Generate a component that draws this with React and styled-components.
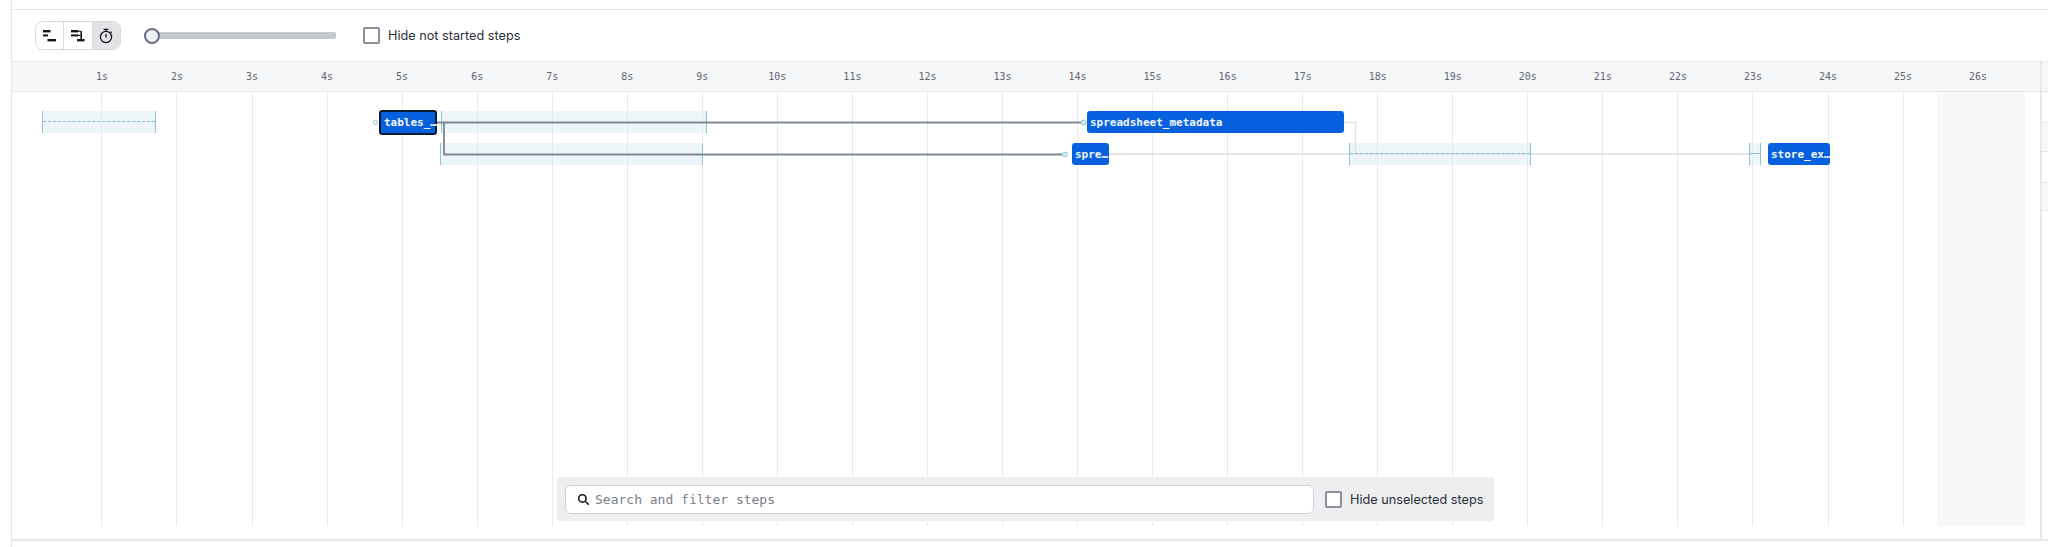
import React from 'react';
import styled, { createGlobalStyle } from 'styled-components';

const TICK = 75.05;
const START = 27.4;
const seconds = Array.from({ length: 26 }, (_, i) => i + 1);

const GlobalStyle = createGlobalStyle`
  html, body {
    margin: 0;
    background: #fff;
    font-family: Inter, "Liberation Sans", sans-serif;
  }
`;

const Page = styled.div`
  width: 2048px;
  height: 547px;
  box-sizing: border-box;
  padding-left: 11px;
  overflow: hidden;
`;

const Frame = styled.div`
  height: 100%;
  display: flex;
  flex-direction: column;
  border-left: 1px solid #e6e8eb;
`;

const TopStrip = styled.div`
  height: 9px;
  flex: none;
  border-bottom: 1px solid #e6e8eb;
`;

const Body = styled.div`
  display: flex;
  height: 529px;
  flex: none;
`;

const Main = styled.div`
  width: 2028px;
  flex: none;
  display: flex;
  flex-direction: column;
`;

const Toolbar = styled.div`
  height: 51px;
  flex: none;
  display: flex;
  align-items: center;
  padding-left: 23px;
  box-sizing: border-box;
`;

const ButtonGroup = styled.div`
  display: flex;
  width: 86px;
  height: 29px;
  box-sizing: border-box;
  border: 1px solid #d5d8dc;
  border-radius: 8px;
  overflow: hidden;
`;

const ViewButton = styled.div`
  flex: 1;
  display: flex;
  align-items: center;
  justify-content: center;
  background: ${p => (p.$active ? '#e1e3e7' : '#fff')};
  & + & {
    border-left: 1px solid #d5d8dc;
  }
`;

const Slider = styled.div`
  width: 192px;
  margin-left: 23px;
  height: 7px;
  background: #c5c8ce;
  border-radius: 2px;
  position: relative;
`;

const Thumb = styled.div`
  position: absolute;
  left: 0;
  top: 50%;
  width: 16px;
  height: 16px;
  box-sizing: border-box;
  transform: translateY(-50%);
  border: 2px solid #6b7186;
  border-radius: 50%;
  background: #eef0f6;
`;

const CheckLabel = styled.label`
  display: flex;
  align-items: center;
  gap: 8px;
  font-size: 12.7px;
  color: #2b2f36;
  white-space: nowrap;
`;

const Box = styled.span`
  display: block;
  width: 17px;
  height: 17px;
  box-sizing: border-box;
  border: 2px solid #8b8f9a;
  border-radius: 2px;
  background: #fff;
`;

const ToolbarCheck = styled(CheckLabel)`
  margin-left: 27px;
`;

const Header = styled.div`
  height: 31px;
  flex: none;
  display: flex;
  padding-left: ${START - 12}px;
  box-sizing: border-box;
  background: #f6f7f9;
  border-top: 1px solid #e6e8eb;
  border-bottom: 1px solid #e6e8eb;
`;

const Tick = styled.div`
  width: ${TICK}px;
  flex: none;
  display: flex;
  justify-content: center;
  align-items: center;
  font-family: "DejaVu Sans Mono", "Liberation Mono", monospace;
  font-size: 10px;
  color: #62666f;
  transform: translateX(${TICK / 2 - 0.5}px);
`;

const Chart = styled.div`
  position: relative;
  height: 434px;
  flex: none;
  overflow: hidden;
`;

const GridLines = styled.div`
  display: flex;
  height: 100%;
  padding-left: ${START - 12}px;
`;

const GridCell = styled.div`
  width: ${TICK}px;
  flex: none;
  box-sizing: border-box;
  border-right: 1px solid #e8eaed;
`;

const Shade = styled.div`
  position: absolute;
  left: ${1937 - 12}px;
  top: 0;
  width: 88px;
  bottom: 0;
  background: #f6f7f9;
`;

const Connectors = styled.svg`
  position: absolute;
  left: 0;
  top: 0;
`;

const Span = styled.div`
  position: absolute;
  left: ${p => p.$x - 12}px;
  width: ${p => p.$w}px;
  top: ${p => p.$y - 92}px;
  height: 22px;
  box-sizing: border-box;
  background: rgba(214, 232, 240, 0.42);
  border-left: 1.5px solid #8cc6d3;
  border-right: 1.5px solid #8cc6d3;
`;

const Dash = styled.div`
  margin-top: 10px;
  border-top: 1px dashed #7fbfcd;
`;

const Step = styled.div`
  position: absolute;
  left: ${p => p.$x - 12}px;
  width: ${p => p.$w}px;
  top: ${p => p.$y - 92}px;
  height: ${p => (p.$selected ? 25 : 22)}px;
  box-sizing: border-box;
  padding-left: 3px;
  display: flex;
  align-items: center;
  background: #0761df;
  color: #f2f7ff;
  border: ${p => (p.$selected ? '2px solid #0d1b33' : 'none')};
  border-radius: 3px;
  font-family: "DejaVu Sans Mono", "Liberation Mono", monospace;
  font-weight: 700;
  font-size: 11px;
  white-space: nowrap;
`;

const SearchBar = styled.div`
  position: absolute;
  left: ${557 - 12}px;
  top: ${477 - 92}px;
  width: 937px;
  height: 44px;
  box-sizing: border-box;
  padding: 0 11px 0 8px;
  display: flex;
  align-items: center;
  gap: 11px;
  background: #eceef0;
  border-radius: 3px;
`;

const SearchInput = styled.div`
  width: 749px;
  height: 29px;
  flex: none;
  box-sizing: border-box;
  padding-left: 11px;
  display: flex;
  align-items: center;
  gap: 5px;
  background: #fff;
  border: 1px solid #cdd0d6;
  border-radius: 6px;
  font-family: "DejaVu Sans Mono", "Liberation Mono", monospace;
  font-size: 13px;
  color: #7b7f87;
`;

const SidePanel = styled.div`
  flex: 1;
  margin-top: 51px;
  border-left: 2px solid #e6e8eb;
`;

const SideHeader = styled.div`
  height: 31px;
  box-sizing: border-box;
  margin-bottom: 30px;
  background: #f6f7f9;
  border-top: 1px solid #e6e8eb;
  border-bottom: 1px solid #e6e8eb;
`;

const SideRow = styled.div`
  height: ${p => p.$h}px;
  box-sizing: border-box;
  border-top: 1px solid #e6e8eb;
  background: ${p => (p.$tint ? '#f8f8f9' : '#fff')};
`;

const BottomLine = styled.div`
  border-top: 2px solid #e4e6e9;
  flex: none;
`;

const StartIcon = () => (
  <svg width="16" height="16" viewBox="0 0 16 16" fill="#14171c">
    <rect x="1" y="2" width="7.5" height="2.4" />
    <rect x="1" y="6.4" width="5" height="2" />
    <rect x="5.5" y="11" width="8.5" height="2.4" />
  </svg>
);

const EndIcon = () => (
  <svg width="16" height="16" viewBox="0 0 16 16" fill="#14171c">
    <rect x="1" y="2" width="7" height="2.4" />
    <rect x="1" y="6.4" width="7" height="2" />
    <rect x="10.4" y="3" width="1.6" height="9" />
    <rect x="7" y="11" width="7.5" height="2.4" />
    <rect x="7.5" y="2.6" width="3" height="1.2" />
    <rect x="7.5" y="6.8" width="3" height="1.2" />
  </svg>
);

const TimerIcon = () => (
  <svg width="16" height="16" viewBox="0 0 16 16" fill="none" stroke="#14171c" strokeWidth="1.3">
    <circle cx="8" cy="9" r="5.6" />
    <path d="M5.6 1.3h4.8M8 1.3v2M8 6v3.4M12.4 3.6l1.2 1.2" />
  </svg>
);

const SearchIcon = () => (
  <svg width="13" height="13" viewBox="0 0 13 13" fill="none" stroke="#14171c" strokeWidth="1.6">
    <circle cx="5.4" cy="5.4" r="3.7" />
    <path d="M8.2 8.2l3.6 3.6" />
  </svg>
);

export default function App() {
  return (
    <Page>
      <GlobalStyle />
      <Frame>
        <TopStrip />
        <Body>
          <Main>
            <Toolbar>
              <ButtonGroup>
                <ViewButton><StartIcon /></ViewButton>
                <ViewButton><EndIcon /></ViewButton>
                <ViewButton $active><TimerIcon /></ViewButton>
              </ButtonGroup>
              <Slider><Thumb /></Slider>
              <ToolbarCheck><Box />Hide not started steps</ToolbarCheck>
            </Toolbar>
            <Header>
              {seconds.map(s => <Tick key={s}>{s}s</Tick>)}
            </Header>
            <Chart>
              <GridLines>
                {seconds.map(s => <GridCell key={s} />)}
              </GridLines>
              <Shade />
              <Connectors width="2028" height="434" viewBox="12 92 2028 434" fill="none">
                <path d="M1108 154H1752" stroke="#e2e4e8" strokeWidth="2" />
                <path d="M1344 122.5H1355.5V154" stroke="#dfe2e6" strokeWidth="1.5" />
              </Connectors>
              <Span $x={42} $w={114} $y={111}><Dash /></Span>
              <Span $x={441} $w={266} $y={111} />
              <Span $x={440} $w={263} $y={143} />
              <Span $x={1349} $w={182} $y={143}><Dash /></Span>
              <Span $x={1749} $w={12} $y={143}><Dash /></Span>
              <Connectors width="2028" height="434" viewBox="12 92 2028 434" fill="none">
                <path d="M437 122.5H1081" stroke="#7f8794" strokeWidth="1.8" />
                <path d="M444 122.5V154.5H1062" stroke="#7f8794" strokeWidth="1.8" />
                <circle cx="375.5" cy="122.5" r="2" fill="#fff" stroke="#8cc6d3" />
                <circle cx="1083.5" cy="122.5" r="2.4" fill="#dcecf1" stroke="#8cc6d3" />
                <circle cx="1065" cy="154.5" r="2.4" fill="#dcecf1" stroke="#8cc6d3" />
              </Connectors>
              <Step $x={379} $w={58} $y={110} $selected>tables_…</Step>
              <Step $x={1087} $w={257} $y={111}>spreadsheet_metadata</Step>
              <Step $x={1072} $w={37} $y={143}>spre…</Step>
              <Step $x={1768} $w={62} $y={143}>store_ex…</Step>
              <SearchBar>
                <SearchInput><SearchIcon />Search and filter steps</SearchInput>
                <CheckLabel><Box />Hide unselected steps</CheckLabel>
              </SearchBar>
            </Chart>
          </Main>
          <SidePanel>
            <SideHeader />
            <SideRow $h={29} $tint />
            <SideRow $h={31} />
            <SideRow $h={28} $tint />
            <SideRow $h={30} />
          </SidePanel>
        </Body>
        <BottomLine />
      </Frame>
    </Page>
  );
}
